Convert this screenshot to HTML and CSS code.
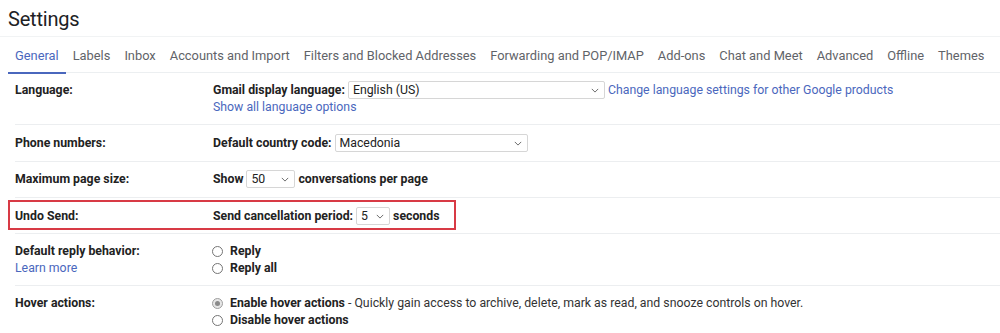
FILE: index.html
```html
<!DOCTYPE html>
<html>
<head>
<meta charset="utf-8">
<link rel="stylesheet" href="styles.css">
</head>
<body>
<div class="page">
  <h1 class="title">Settings</h1>
  <nav class="tabs">
    <span class="tab active">General</span>
    <span class="tab">Labels</span>
    <span class="tab">Inbox</span>
    <span class="tab">Accounts and Import</span>
    <span class="tab">Filters and Blocked Addresses</span>
    <span class="tab">Forwarding and POP/IMAP</span>
    <span class="tab">Add-ons</span>
    <span class="tab">Chat and Meet</span>
    <span class="tab">Advanced</span>
    <span class="tab">Offline</span>
    <span class="tab">Themes</span>
  </nav>
  <div class="rows">
    <div class="row r-lang">
      <div class="label">Language:</div>
      <div class="value">
        <div class="line">
          <b>Gmail display language:</b>
          <span class="select w-lang"><span>English (US)</span><svg class="chev" viewBox="0 0 10 6"><path d="M1 1l4 4 4-4"/></svg></span>
          <a class="link">Change language settings for other Google products</a>
        </div>
        <div class="line"><a class="link">Show all language options</a></div>
      </div>
    </div>
    <div class="row">
      <div class="label">Phone numbers:</div>
      <div class="value">
        <div class="line">
          <b>Default country code:</b>
          <span class="select w-country"><span>Macedonia</span><svg class="chev" viewBox="0 0 10 6"><path d="M1 1l4 4 4-4"/></svg></span>
        </div>
      </div>
    </div>
    <div class="row r-max">
      <div class="label">Maximum page size:</div>
      <div class="value">
        <div class="line">
          <b>Show</b>
          <span class="select w-page"><span>50</span><svg class="chev" viewBox="0 0 10 6"><path d="M1 1l4 4 4-4"/></svg></span>
          <b>conversations per page</b>
        </div>
      </div>
    </div>
    <div class="row r-undo">
      <div class="highlight"></div>
      <div class="label">Undo Send:</div>
      <div class="value">
        <div class="line">
          <b>Send cancellation period:</b>
          <span class="select w-undo"><span>5</span><svg class="chev" viewBox="0 0 10 6"><path d="M1 1l4 4 4-4"/></svg></span>
          <b>seconds</b>
        </div>
      </div>
    </div>
    <div class="row r-two">
      <div class="label">
        <div class="line">Default reply behavior:</div>
        <div class="line"><a class="link normal">Learn more</a></div>
      </div>
      <div class="value">
        <div class="line"><span class="radio"></span><b>Reply</b></div>
        <div class="line"><span class="radio"></span><b>Reply all</b></div>
      </div>
    </div>
    <div class="row r-two last">
      <div class="label">
        <div class="line">Hover actions:</div>
      </div>
      <div class="value">
        <div class="line"><span class="radio checked"></span><b>Enable hover actions</b><span class="desc">&nbsp;- Quickly gain access to archive, delete, mark as read, and snooze controls on hover.</span></div>
        <div class="line"><span class="radio"></span><b>Disable hover actions</b></div>
      </div>
    </div>
  </div>
</div>
</body>
</html>
```

FILE: styles.css
```css
* { box-sizing: border-box; }
html, body { margin: 0; padding: 0; background: #fff; }
body {
  font-family: Roboto, "Liberation Sans", Arial, sans-serif;
  color: #222;
  width: 1000px;
  height: 333px;
  overflow: hidden;
}
.title {
  margin: 0;
  padding: 6px 0 0 8px;
  height: 37px;
  font-weight: 400;
  font-size: 20px;
  letter-spacing: -0.2px;
  line-height: 26px;
  color: #202124;
  border-bottom: 1px solid #f1f3f4;
}
.tabs {
  display: flex;
  gap: 14px;
  margin-left: 8px;
  padding: 0 0 0 7px;
  height: 36px;
  align-items: center;
  border-bottom: 1px solid #eceff1;
  position: relative;
}
.tab {
  font-size: 12.85px;
  color: #5f6368;
  line-height: 36px;
  padding-top: 2px;
  position: relative;
  white-space: nowrap;
}
.tab.active { color: #4a67bd; }
.tab.active::after {
  content: "";
  position: absolute;
  left: -7px;
  right: -7px;
  bottom: 0;
  height: 2px;
  background: #4a67bd;
}
.rows { margin-left: 15px; }
.row {
  display: grid;
  grid-template-columns: 198px 1fr;
  padding: 9px 0 9px;
  border-bottom: 1px solid #eceef0;
  font-size: 12.3px;
  position: relative;
}
.row.r-lang { padding: 8px 0 8px; }
.row.r-max { padding: 8px 0 9px; }
.row.r-undo { padding: 9px 0 8px; }
.row.r-two { padding: 9px 0 8px; }
.row.last { border-bottom: none; }
.label {
  font-weight: 700;
  line-height: 18px;
  display: flex;
  flex-direction: column;
}
.label > .line { line-height: 17px; }
.value { display: flex; flex-direction: column; }
.line {
  display: flex;
  align-items: center;
  min-height: 17px;
  line-height: 17px;
  white-space: nowrap;
}
.line > b { font-weight: 700; }
.select {
  display: inline-flex;
  align-items: center;
  justify-content: space-between;
  height: 18px;
  border: 1px solid #d6d6d6;
  border-radius: 2px;
  padding: 0 5px 0 4px;
  margin: 0 3px;
  font-weight: 400;
  color: #222;
  background: #fff;
}
.chev { width: 8px; height: 5px; fill: none; stroke: #666; stroke-width: 1.2; }
.w-lang { width: 257px; }
.w-country { width: 193px; }
.w-page { width: 49px; }
.w-undo { width: 34px; }
.link { color: #4a67bd; font-weight: 400; }
.radio {
  width: 11px;
  height: 11px;
  border: 1px solid #757575;
  border-radius: 50%;
  margin: 0 7px 0 -1px;
  display: inline-block;
  position: relative;
  flex: none;
}
.radio.checked { border-color: #9e9e9e; background: #e6e6e6; }
.radio.checked::after {
  content: "";
  position: absolute;
  left: 2px; top: 2px;
  width: 5px; height: 5px;
  border-radius: 50%;
  background: #8a8a8a;
}
.desc { font-weight: 400; color: #333; }
.highlight {
  position: absolute;
  left: -7px;
  top: 2px;
  width: 448px;
  height: 30px;
  border: 2px solid #d83a45;
  pointer-events: none;
}
```
